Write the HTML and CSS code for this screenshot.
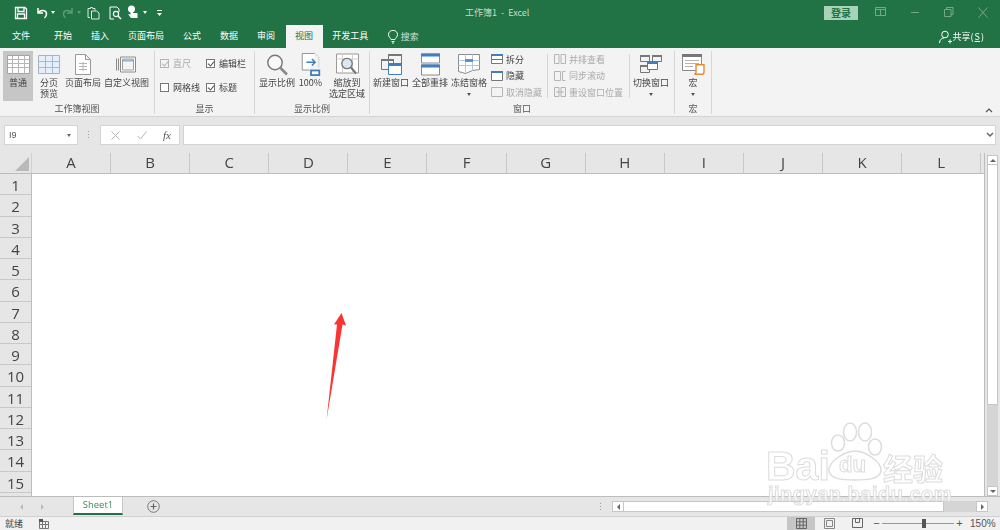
FILE: index.html
```html
<!DOCTYPE html>
<html lang="zh-CN">
<head>
    <meta charset="UTF-8">
    <title>工作簿1 - Excel</title>
    <link rel="stylesheet" href="styles.css">
</head>
<body>
<div class="app">
    <!-- title bar -->
    <div class="titlebar">
        <div class="qat">
            <svg class="qat-save" width="14" height="14" viewBox="0 0 14 14"><path d="M1.500 1.500h9.500l1.500 1.500v9.500h-11z M4 1.500v4h6v-4 M3.500 12.500v-4.500h7v4.500" fill="none" stroke="#fff" stroke-width="1.300"/></svg>
            <svg class="qat-undo" width="14" height="14" viewBox="0 0 14 14"><path d="M3 2v5h5 M3.500 6.500c2-3 8-3 8 1.500 0 1.500-.8 3-2 4" fill="none" stroke="#fff" stroke-width="1.500"/></svg>
            <span class="qat-caret"></span>
            <svg class="qat-redo" width="14" height="14" viewBox="0 0 14 14"><path d="M11 2v5h-5 M10.500 6.500c-2-3-8-3-8 1.500 0 1.500.8 3 2 4" fill="none" stroke="#5d9a78" stroke-width="1.500"/></svg>
            <span class="qat-caret dim"></span>
            <svg class="qat-copy" width="13" height="14" viewBox="0 0 13 14"><path d="M3 11.500h-2v-9h2.500v-1h2v1h2.500v2 M4.500 5h5l2.500 2v6h-7.500z" fill="none" stroke="#dbe9e0" stroke-width="1"/></svg>
            <svg class="qat-preview" width="13" height="14" viewBox="0 0 13 14"><path d="M10 6v-3l-2-2h-7v12h4" fill="none" stroke="#fff" stroke-width="1"/><circle cx="7" cy="8" r="2.600" fill="none" stroke="#fff" stroke-width="1.200"/><path d="M9 10l3 3" stroke="#fff" stroke-width="1.500"/></svg>
            <svg class="qat-touch" width="12" height="15" viewBox="0 0 12 15"><circle cx="4.500" cy="4" r="3.500" fill="#fff"/><path d="M3.500 4h2.500v4h4.500v5h-6.500l-3-4 2.500.5z" fill="#fff"/></svg>
            <span class="qat-caret"></span>
            <svg class="qat-more" width="5" height="6" viewBox="0 0 5 6"><path d="M0 .5h5" stroke="#fff"/><path d="M0 3h5l-2.500 3z" fill="#fff"/></svg>
        </div>
        <div class="doc-title">工作簿1&nbsp; -&nbsp; Excel</div>
        <div class="login">登录</div>
        <div class="win-btns">
            <svg width="12" height="10" viewBox="0 0 12 10"><path d="M.5.5h10v8h-10z M.5 2.500h10 M5.500 2.500v6" fill="none" stroke="#74a88b"/></svg>
            <svg width="12" height="10" viewBox="0 0 12 10"><path d="M2 5.500h8" stroke="#74a88b"/></svg>
            <svg width="12" height="10" viewBox="0 0 12 10"><path d="M1.500 2.500h6.500v7h-6.500z M3.500 2.500v-2h6.500v7h-2" fill="none" stroke="#74a88b"/></svg>
            <svg width="12" height="11" viewBox="0 0 12 11"><path d="M1.500.5l9 10 M10.500.5l-9 10" stroke="#74a88b"/></svg>
        </div>
    </div>

    <!-- ribbon tabs -->
    <div class="tabs">
        <span class="tab tab-file">文件</span>
        <span class="tab">开始</span>
        <span class="tab">插入</span>
        <span class="tab">页面布局</span>
        <span class="tab">公式</span>
        <span class="tab">数据</span>
        <span class="tab">审阅</span>
        <span class="tab active">视图</span>
        <span class="tab">开发工具</span>
        <span class="tab-search">
            <svg width="10" height="14" viewBox="0 0 10 14"><path d="M3 9.500c-.5-1.500-2.500-2.500-2.500-5a4.500 4.200 0 0 1 9 0c0 2.500-2 3.500-2.500 5z M3.500 11.500h3 M4 13h2" fill="none" stroke="#fff"/></svg>
            搜索
        </span>
        <span class="share">
            <svg width="13" height="14" viewBox="0 0 13 14"><circle cx="6" cy="4.500" r="3.300" fill="none" stroke="#fff"/><path d="M.5 13c0-3 2-5 4.500-5 M9 11.500h4 M11 9.500v4" fill="none" stroke="#fff"/></svg>
            共享(<u>S</u>)
        </span>
    </div>

    <!-- ribbon -->
    <div class="ribbon">
        <div class="group g-views">
            <div class="group-body">
                <div class="big selected w30">
                    <svg width="23" height="19" viewBox="0 0 23 19"><path fill="#fff" stroke="#a3a3a3" d="M.5.5h22v18h-22z"/><path fill="none" stroke="#b5b5b5" d="M.5 4.500h22 M.5 8.500h22 M.5 12.500h22 M5.500.5v18 M11.500.5v18 M17.500.5v18"/></svg>
                    <span>普通</span>
                </div>
                <div class="big w26">
                    <svg width="22" height="19" viewBox="0 0 22 19"><path fill="#e6eef7" stroke="#a6b2be" d="M.5.5h21v18h-21z"/><path fill="none" stroke="#9dbcdb" d="M.5 6.500h21 M.5 12.500h21 M7.500.5v18 M14.500.5v18"/></svg>
                    <span>分页<br>预览</span>
                </div>
                <div class="big w36">
                    <svg width="16" height="21" viewBox="0 0 16 21"><path fill="#fff" stroke="#999" d="M.5.5h10l5 5v15h-15z M10.500.5v5h5"/><path fill="none" stroke="#b5b5b5" d="M4 9.500h8 M4 12.500h8 M4 15.500h8 M8 8v9"/></svg>
                    <span>页面布局</span>
                </div>
                <div class="big w45">
                    <svg width="21" height="20" viewBox="0 0 21 20"><path fill="#fff" stroke="#8b8b8b" d="M4.500 2.500h15v15h-15z"/><path fill="#f3f3f3" stroke="#a0a0a0" d="M6.500 4.500h11v11h-11z"/><path fill="#8fb4d9" d="M7 5h10v2h-10z"/><path fill="none" stroke="#8b8b8b" d="M.5 4v12 M2.500 4v12"/></svg>
                    <span>自定义视图</span>
                </div>
            </div>
            <div class="group-label">工作簿视图</div>
        </div>

        <div class="group g-show">
            <div class="group-body checks">
                <label class="chk off"><i class="box on"></i>直尺</label>
                <label class="chk"><i class="box on"></i>编辑栏</label>
                <label class="chk"><i class="box"></i>网格线</label>
                <label class="chk"><i class="box on"></i>标题</label>
            </div>
            <div class="group-label">显示</div>
        </div>

        <div class="group g-zoom">
            <div class="group-body">
                <div class="big w36">
                    <svg width="22" height="22" viewBox="0 0 22 22"><circle cx="9" cy="9" r="7.200" fill="#f8f8f8" stroke="#777" stroke-width="1.400"/><path d="M14 14l7 7" stroke="#8a8a8a" stroke-width="2.600"/></svg>
                    <span>显示比例</span>
                </div>
                <div class="big w25">
                    <svg width="20" height="25" viewBox="0 0 20 25"><path fill="#fff" stroke="#8b8b8b" d="M14 .5h-13.500v18h8"/><path fill="none" stroke="#aaa" stroke-dasharray="1 1" d="M14 .5l4.500 4v12"/><path fill="none" stroke="#3f7fc0" stroke-width="1.600" d="M5 10h9 M11 6.500l3.500 3.500-3.500 3.500"/><path fill="#3f7fc0" d="M9 18h11v7h-11z"/><path fill="#fff" d="M11 20h7v3h-7z"/></svg>
                    <span>100%</span>
                </div>
                <div class="big w36 m5">
                    <svg width="23" height="22" viewBox="0 0 23 22"><path fill="#fff" stroke="#999" d="M.5.5h22v19h-22z"/><path fill="none" stroke="#d0d0d0" d="M.5 5.500h22 M6.500.5v19 M16.500.5v19"/><circle cx="11" cy="10" r="5.200" fill="#dbe8f4" stroke="#777" stroke-width="1.300"/><path d="M15 14l5 6" stroke="#777" stroke-width="2"/></svg>
                    <span>缩放到<br>选定区域</span>
                </div>
            </div>
            <div class="group-label">显示比例</div>
        </div>

        <div class="group g-window">
            <div class="group-body">
                <div class="big w36">
                    <svg width="21" height="21" viewBox="0 0 21 21"><path fill="#f3f3f3" stroke="#777" d="M7.500.5h13v10h-13z M.5 5.500h12v10h-12z"/><path fill="#777" d="M7 0h14v2h-14z M0 5h13v2h-13z"/><path fill="#fff" stroke="#3f7fc0" d="M7.500 9.500h13v11h-13z"/><path fill="#3f7fc0" d="M7 9h14v3h-14z"/></svg>
                    <span>新建窗口</span>
                </div>
                <div class="big w36">
                    <svg width="19" height="22" viewBox="0 0 19 22"><path fill="#fff" stroke="#8b8b8b" d="M.5.5h18v9h-18z M.5 11.500h18v10h-18z"/><path fill="#3f7fc0" d="M0 0h19v3h-19z M0 11h19v3h-19z"/></svg>
                    <span>全部重排</span>
                </div>
                <div class="big w36">
                    <svg width="22" height="21" viewBox="0 0 22 21"><path fill="#fff" stroke="#8b8b8b" d="M.5.5h21v15l-7 1-7 3-7-2z"/><path fill="none" stroke="#b5c9dc" d="M.5 6.500h21 M.5 11.500h21 M7.500.5v18 M14.500.5v16"/><path fill="#5b94cc" d="M7 5h8v3h-8z"/></svg>
                    <span>冻结窗格</span>
                    <i class="caret"></i>
                </div>
                <div class="small-col c-split">
                    <div class="small"><svg class="s-ic" width="12" height="10" viewBox="0 0 12 10"><path fill="#fff" stroke="#777" d="M.5.5h11v9h-11z"/><path fill="#3f7fc0" d="M0 0h12v2h-12z M1 5h10v1h-10z"/></svg>拆分</div>
                    <div class="small"><svg class="s-ic" width="12" height="10" viewBox="0 0 12 10"><path fill="#fff" stroke="#777" d="M.5.5h11v9h-11z"/><path fill="#3f7fc0" d="M0 0h12v2h-12z"/></svg>隐藏</div>
                    <div class="small off"><svg class="s-ic" width="12" height="10" viewBox="0 0 12 10"><path fill="#f3f3f3" stroke="#b5b5b5" d="M.5.5h11v9h-11z"/></svg>取消隐藏</div>
                </div>
                <div class="vsep"></div>
                <div class="small-col c-sync">
                    <div class="small off"><svg class="s-ic" width="12" height="10" viewBox="0 0 12 10"><path fill="none" stroke="#b5b5b5" d="M.5.5h4.500v9h-4.500z M7 .5h4.500v9h-4.500z"/></svg>并排查看</div>
                    <div class="small off"><svg class="s-ic" width="12" height="10" viewBox="0 0 12 10"><path fill="none" stroke="#b5b5b5" d="M.5.5h6v9h-6z M8.500.5h3 M8.500 9.500h3 M8.500.5v9"/></svg>同步滚动</div>
                    <div class="small off"><svg class="s-ic" width="12" height="10" viewBox="0 0 12 10"><path fill="none" stroke="#b5b5b5" d="M.5.5h4.500v9h-4.500z M7 .5h4.500v9h-4.500z M2 5h8"/></svg>重设窗口位置</div>
                </div>
                <div class="vsep"></div>
                <div class="big w36">
                    <svg width="22" height="19" viewBox="0 0 22 19"><path fill="#f3f3f3" stroke="#777" d="M.5.500h9v6h-9z M12.500.5h9v6h-9z M.5 10.500h9v7h-9z"/><path fill="#777" d="M0 0h10v2h-10z M12 0h10v2h-10z M0 10h10v2h-10z"/><path fill="#fff" stroke="#3f7fc0" d="M7.500 6.500h10v8h-10z"/><path fill="#3f7fc0" d="M7 6h11v3h-11z"/></svg>
                    <span>切换窗口</span>
                    <i class="caret"></i>
                </div>
            </div>
            <div class="group-label">窗口</div>
        </div>

        <div class="group g-macro">
            <div class="group-body">
                <div class="big w36">
                    <svg width="23" height="21" viewBox="0 0 23 21"><path fill="#fff" stroke="#8b8b8b" d="M.5.5h19v16h-19z"/><path fill="#777" d="M0 0h20v3h-20z"/><path fill="none" stroke="#b5b5b5" d="M3 6.500h14 M3 9.500h14 M3 12.500h8"/><path fill="#fff" stroke="#e58a33" stroke-width="1.400" d="M14 10.700h8v7c0 2-1 2.500-2 2.500h-7.500c1-.5 1.500-1 1.500-2z"/></svg>
                    <span>宏</span>
                    <i class="caret"></i>
                </div>
            </div>
            <div class="group-label">宏</div>
        </div>
        <svg class="collapse" width="8" height="5" viewBox="0 0 8 5"><path d="M1 4l3-3 3 3" fill="none" stroke="#555" stroke-width="1.200"/></svg>
    </div>

    <!-- formula bar -->
    <div class="formula-bar">
        <div class="name-box">I9<i class="caret"></i></div>
        <div class="grip"></div>
        <div class="fx-box">
            <svg width="9" height="9" viewBox="0 0 9 9"><path d="M.5.500l8 8 M8.500.5l-8 8" stroke="#b5b5b5"/></svg>
            <svg width="10" height="9" viewBox="0 0 10 9"><path d="M.5 5l3 3 6-7.500" fill="none" stroke="#b5b5b5"/></svg>
            <span class="fx">fx</span>
        </div>
        <div class="formula-input"><svg width="8" height="6" viewBox="0 0 8 6"><path d="M1 1l3 3 3-3" fill="none" stroke="#666" stroke-width="1.500"/></svg></div>
    </div>

    <!-- sheet -->
    <div class="sheet">
        <div class="sheet-main">
            <div class="col-head">
                <div class="corner"><i></i></div>
                <div class="col">A</div><div class="col">B</div><div class="col">C</div><div class="col">D</div>
                <div class="col">E</div><div class="col">F</div><div class="col">G</div><div class="col">H</div>
                <div class="col">I</div><div class="col">J</div><div class="col">K</div><div class="col">L</div>
            </div>
            <div class="sheet-body">
                <div class="row-head">
                    <div class="row">1</div><div class="row">2</div><div class="row">3</div><div class="row">4</div><div class="row">5</div>
                    <div class="row">6</div><div class="row">7</div><div class="row">8</div><div class="row">9</div><div class="row">10</div>
                    <div class="row">11</div><div class="row">12</div><div class="row">13</div><div class="row">14</div><div class="row">15</div>
                </div>
                <div class="cells"></div>
            </div>
        </div>
        <div class="vscroll">
            <div class="sb-btn"><i class="tri up"></i></div>
            <div class="v-thumb"></div>
            <div class="v-track"></div>
            <div class="sb-btn"><i class="tri down"></i></div>
        </div>
    </div>

    <!-- sheet tabs -->
    <div class="tabbar">
        <i class="tri left dim nav-a"></i>
        <i class="tri right dim nav-b"></i>
        <div class="sheet-tab">Sheet1</div>
        <svg class="add-sheet" width="13" height="13" viewBox="0 0 13 13"><circle cx="6.500" cy="6.500" r="5.800" fill="none" stroke="#777"/><path d="M3.500 6.500h6 M6.500 3.500v6" stroke="#666" stroke-width="1.200"/></svg>
        <div class="grip tab-grip"></div>
        <div class="hscroll">
            <div class="sb-btn h"><i class="tri left"></i></div>
            <div class="h-thumb"></div>
            <div class="h-track"></div>
            <div class="sb-btn h"><i class="tri right"></i></div>
        </div>
    </div>

    <!-- status bar -->
    <div class="statusbar">
        <span class="ready">就绪</span>
        <svg class="macro-ic" width="10" height="10" viewBox="0 0 10 10"><path d="M.5 2.500h9v7h-9z M.5 5.500h9 M3.500 2.500v7 M6.500 2.500v7" fill="none" stroke="#777"/><path fill="#555" d="M0 0h4v3h-4z"/></svg>
        <div class="views">
            <div class="view active"><svg width="11" height="11" viewBox="0 0 11 11"><path d="M.5.5h10v10h-10z M.5 3.800h10 M.5 7.200h10 M3.800.5v10 M7.200.5v10" fill="none" stroke="#666"/></svg></div>
            <div class="view"><svg width="11" height="11" viewBox="0 0 11 11"><path d="M.5.5h10v10h-10z M2.500 2.500h6v6h-6z" fill="none" stroke="#888"/></svg></div>
            <div class="view"><svg width="11" height="11" viewBox="0 0 11 11"><path d="M.5.5h10v9h-10z M3.500.5v4h4v-4" fill="none" stroke="#666"/></svg></div>
        </div>
        <div class="zoom">
            <span class="z-sign">−</span>
            <div class="z-line"><i></i></div>
            <span class="z-sign">+</span>
        </div>
        <span class="z-pct">150%</span>
    </div>

    <!-- overlays: annotation arrow and image watermark -->
    <svg class="arrow" width="24" height="110" viewBox="0 0 24 110"><path d="M18.500 1L23 13.500 19.500 12.500 3.500 108 14 12.500 11 12.500z" fill="#fb3333"/></svg>
    <div class="watermark">
        <svg class="paw" width="58" height="60" viewBox="0 0 58 60"><g fill="rgba(255,255,255,.7)" stroke="#dcdcdc" stroke-width="1.500"><ellipse cx="12" cy="21" rx="6.500" ry="8"/><ellipse cx="24" cy="10" rx="6.500" ry="9"/><ellipse cx="39" cy="10" rx="6.500" ry="9"/><ellipse cx="49" cy="25" rx="6.500" ry="8"/><path d="M29 29c9 0 27 10 26 20-1 9-17 9-26 9s-25 0-26-9c-1-10 17-20 26-20z"/></g></svg>
        <div class="wm-bai">Bai</div>
        <div class="wm-du">du</div>
        <div class="wm-jy">经验</div>
        <div class="wm-url">jingyan.baidu.com</div>
    </div>
</div>
</body>
</html>
```

FILE: styles.css
```css
* {
    box-sizing: border-box;
}
body {
    margin: 0;
    font-family: "Noto Sans CJK SC", "Liberation Sans", sans-serif;
    font-size: 9px;
    color: #444;
    background-color: #e6e6e6;
}
.app {
    position: relative;
    width: 1000px;
    height: 530px;
    overflow: hidden;
    display: flex;
    flex-direction: column;
    filter: blur(.35px);
}

/* title bar */
.titlebar {
    height: 25px;
    background-color: #217346;
    color: #fff;
    display: flex;
    align-items: center;
}
.qat {
    width: 465px;
    padding-left: 14px;
    display: flex;
    align-items: center;
}
.qat-caret {
    width: 0;
    height: 0;
    margin: 0 6px 0 2px;
    border: 2px solid transparent;
    border-top: 3px solid #fff;
    border-bottom: 0;
}
.qat-caret.dim {
    border-top-color: #5d9a78;
}
.qat-save {
    margin-right: 7px;
}
.qat-copy {
    margin-right: 9px;
}
.qat-preview {
    margin-right: 5px;
}
.qat-touch {
    margin-right: 2px;
}
.qat-more {
    margin-left: 4px;
}
.doc-title {
    width: 359px;
    color: #c4dbcc;
    font-size: 9px;
}
.login {
    width: 34px;
    height: 14px;
    line-height: 14px;
    text-align: center;
    background-color: #a9d3b9;
    color: #217346;
    font-size: 10px;
    font-weight: bold;
}
.win-btns {
    margin-left: 17px;
    width: 114px;
    display: flex;
    justify-content: space-between;
}

/* tabs */
.tabs {
    height: 23px;
    background-color: #217346;
    color: #fff;
    display: flex;
    align-items: stretch;
}
.tab {
    padding: 0 9.5px;
    line-height: 22px;
}
.tab-file {
    padding: 0 12px;
    margin-right: 2.5px;
}
.tab.active {
    margin-left: 1px;
    background-color: #f3f3f3;
    color: #217346;
}
.tab-search {
    margin-left: 10px;
    display: flex;
    align-items: center;
    gap: 3px;
    color: #cfe2d6;
}
.share {
    margin-left: auto;
    margin-right: 16px;
    display: flex;
    align-items: center;
    gap: 1px;
}

/* ribbon */
.ribbon {
    position: relative;
    height: 69px;
    background-color: #f3f3f3;
    border-bottom: 1px solid #d4d4d4;
    display: flex;
    padding-top: 3px;
}
.group {
    height: 63px;
    border-right: 1px solid #d6d6d6;
    display: flex;
    flex-direction: column;
    flex: none;
}
.g-views {
    width: 155px;
}
.g-show {
    width: 100px;
}
.g-zoom {
    width: 115px;
}
.g-window {
    width: 305px;
}
.g-macro {
    width: 37px;
}
.group-body {
    height: 53px;
    padding-left: 3px;
    display: flex;
    gap: 3px;
}
.g-zoom .group-body {
    padding-left: 4px;
}
.g-macro .group-body {
    padding-left: 0;
}
.group-label {
    text-align: center;
    line-height: 11px;
    color: #555;
}
.big {
    height: 50px;
    padding-top: 2px;
    display: flex;
    flex-direction: column;
    align-items: center;
    text-align: center;
    line-height: 11px;
    flex: none;
}
.big svg {
    height: 23px;
    margin-bottom: 1px;
    flex: none;
    overflow: visible;
}
.big.selected {
    background-color: #c6c6c6;
}
.w25 {
    width: 25px;
}
.w26 {
    width: 26px;
}
.w30 {
    width: 30px;
}
.w36 {
    width: 36px;
}
.w45 {
    width: 45px;
    white-space: nowrap;
}
.m5 {
    margin-left: 3px;
}
.caret {
    display: block;
    width: 0;
    height: 0;
    margin-top: 5px;
    border: 2px solid transparent;
    border-top: 3px solid #555;
    border-bottom: 0;
}

/* display checkboxes */
.checks {
    padding: 4px 0 0 5px;
    display: grid;
    grid-template-columns: 46px 1fr;
    grid-template-rows: 24px 24px;
    gap: 0;
}
.chk {
    display: flex;
    align-items: center;
    gap: 4px;
    height: 16px;
}
.chk.off {
    color: #aaa;
}
.box {
    width: 9px;
    height: 9px;
    background-color: #fff;
    border: 1px solid #777;
    position: relative;
}
.chk.off .box {
    background-color: #f3f3f3;
    border-color: #b5b5b5;
}
.box.on::after {
    content: "";
    position: absolute;
    left: 2px;
    top: 0;
    width: 3px;
    height: 5px;
    border-right: 1px solid #555;
    border-bottom: 1px solid #555;
    transform: rotate(40deg);
}
.chk.off .box.on::after {
    border-color: #b5b5b5;
}

/* small stacked buttons */
.small-col {
    display: flex;
    flex-direction: column;
    flex: none;
}
.small {
    height: 16.5px;
    display: flex;
    align-items: center;
    gap: 3px;
    white-space: nowrap;
}
.small.off {
    color: #aaa;
}
.s-ic {
    flex: none;
}
.c-split {
    width: 53px;
    margin-left: 1px;
}
.c-sync {
    width: 72px;
    margin-left: 3px;
}
.vsep {
    width: 1px;
    height: 44px;
    margin-top: 3px;
    background-color: #d6d6d6;
    flex: none;
}
.collapse {
    position: absolute;
    right: 7px;
    bottom: 3px;
}

/* formula bar */
.formula-bar {
    height: 36px;
    padding: 8px 4px;
    background-color: #e6e6e6;
    display: flex;
    align-items: stretch;
}
.name-box {
    width: 74px;
    background-color: #fff;
    border: 1px solid #d4d4d4;
    padding: 0 4px;
    line-height: 18px;
    color: #555;
    display: flex;
    align-items: center;
    justify-content: space-between;
    font-family: "Liberation Sans", sans-serif;
}
.name-box .caret {
    margin: 0 2px 0 0;
    border-width: 3px 2.5px 0;
    border-style: solid;
    border-color: #666 transparent transparent;
}
.grip {
    width: 1px;
    height: 8px;
    margin: 6px 11px 0 10px;
    background: repeating-linear-gradient(#999 0 1px, transparent 1px 3px);
    flex: none;
}
.fx-box {
    width: 80px;
    background-color: #fff;
    border: 1px solid #d4d4d4;
    display: flex;
    align-items: center;
    justify-content: space-between;
    padding: 0 8px 0 10px;
}
.fx {
    font-family: "Liberation Serif", serif;
    font-style: italic;
    font-size: 11px;
    color: #555;
}
.formula-input {
    flex: 1;
    margin-left: 3px;
    background-color: #fff;
    border: 1px solid #d4d4d4;
    display: flex;
    align-items: center;
    justify-content: flex-end;
    padding-right: 1px;
}

/* sheet */
.sheet {
    height: 344px;
    display: flex;
    border-bottom: 1px solid #bcbcbc;
}
.sheet-main {
    width: 985px;
    border-right: 1px solid #bcbcbc;
    display: flex;
    flex-direction: column;
}
.col-head {
    height: 21px;
    display: flex;
    border-bottom: 1px solid #bcbcbc;
    flex: none;
}
.corner {
    width: 32px;
    padding: 4px 0 0 15px;
    border-right: 1px solid #d0d0d0;
    flex: none;
}
.corner i {
    display: block;
    width: 0;
    height: 0;
    border-left: 14px solid transparent;
    border-bottom: 14px solid #b9b9b9;
}
.col {
    width: 79.1px;
    flex: none;
    border-right: 1px solid #c8c8c8;
    text-align: center;
    font: 15px/19px "Open Sans", sans-serif;
    color: #444;
}
.sheet-body {
    flex: 1;
    display: flex;
    min-height: 0;
}
.row-head {
    width: 32px;
    flex: none;
    border-right: 1px solid #bcbcbc;
}
.row {
    height: 21.25px;
    border-bottom: 1px solid #c8c8c8;
    text-align: center;
    font: 15px/22px "Open Sans", sans-serif;
    color: #444;
}
.cells {
    flex: 1;
    background-color: #fff;
}
.vscroll {
    width: 15px;
    padding: 2px 2px 0;
    display: flex;
    flex-direction: column;
}
.sb-btn {
    height: 10px;
    background-color: #fff;
    border: 1px solid #c6c6c6;
    display: flex;
    align-items: center;
    justify-content: center;
    flex: none;
}
.v-thumb {
    height: 240px;
    background-color: #fff;
    border: 1px solid #c6c6c6;
    border-top: 0;
    flex: none;
}
.v-track {
    flex: 1;
    background-color: #d5d5d5;
}
.tri {
    display: block;
    width: 0;
    height: 0;
    border-style: solid;
    border-color: transparent;
}
.tri.up {
    border-width: 0 3px 3px;
    border-bottom-color: #666;
}
.tri.down {
    border-width: 3px 3px 0;
    border-top-color: #666;
}
.tri.left {
    border-width: 3px 3px 3px 0;
    border-right-color: #666;
}
.tri.right {
    border-width: 3px 0 3px 3px;
    border-left-color: #666;
}
.tri.left.dim {
    border-right-color: #bbb;
}
.tri.right.dim {
    border-left-color: #bbb;
}

/* sheet tabs */
.tabbar {
    height: 20px;
    display: flex;
    align-items: center;
    background-color: #e6e6e6;
    border-bottom: 1px solid #d0d0d0;
}
.nav-a {
    margin-left: 20px;
}
.nav-b {
    margin-left: 18px;
}
.sheet-tab {
    width: 50px;
    height: 18px;
    margin-left: 29px;
    background-color: #fff;
    border: 1px solid #c6c6c6;
    border-top: 0;
    border-bottom: 2px solid #217346;
    color: #3a8a5e;
    text-align: center;
    line-height: 16px;
    font-family: "Open Sans", sans-serif;
    font-size: 9.5px;
    align-self: flex-start;
}
.add-sheet {
    margin-left: 24px;
}
.tab-grip {
    margin: 0 0 0 440px;
}
.hscroll {
    margin-left: 11px;
    width: 376px;
    height: 11px;
    display: flex;
}
.sb-btn.h {
    width: 12px;
    height: 11px;
}
.h-thumb {
    width: 320px;
    background-color: #fff;
    border: 1px solid #c6c6c6;
    border-left: 0;
}
.h-track {
    flex: 1;
    background-color: #d5d5d5;
}

/* status bar */
.statusbar {
    height: 13px;
    background-color: #f1f1f1;
    display: flex;
    align-items: center;
    padding-left: 5px;
    line-height: 13px;
}
.macro-ic {
    margin-left: 16px;
}
.views {
    margin-left: 738px;
    display: flex;
    height: 13px;
}
.view {
    width: 28px;
    display: flex;
    align-items: center;
    justify-content: center;
}
.view.active {
    background-color: #c6c6c6;
}
.zoom {
    margin-left: 2px;
    display: flex;
    align-items: center;
    gap: 2px;
}
.z-sign {
    font-family: "Liberation Sans", sans-serif;
    font-size: 11px;
    width: 7px;
    text-align: center;
    color: #555;
}
.z-line {
    position: relative;
    width: 72px;
    height: 1px;
    background-color: #999;
}
.z-line i {
    position: absolute;
    left: 40px;
    top: -4px;
    width: 4px;
    height: 9px;
    background-color: #555;
}
.z-pct {
    margin-left: 7px;
    font-family: "Liberation Sans", sans-serif;
    font-size: 10px;
    color: #555;
}

/* overlays */
.arrow {
    position: absolute;
    left: 323px;
    top: 312px;
}
.watermark {
    position: absolute;
    left: 766px;
    top: 422px;
    width: 180px;
    height: 92px;
    color: rgba(255, 255, 255, .7);
    -webkit-text-stroke: 1px #dcdcdc;
    white-space: nowrap;
}
.paw {
    position: absolute;
    left: 60px;
    top: 0;
}
.wm-bai {
    position: absolute;
    left: 0;
    top: 29px;
    font: bold 41px/30px "Liberation Sans", sans-serif;
}
.wm-du {
    position: absolute;
    left: 73px;
    top: 35px;
    font: bold 22px/16px "Liberation Sans", sans-serif;
}
.wm-jy {
    position: absolute;
    left: 117px;
    top: 30px;
    font: bold 30px/30px "Noto Sans CJK SC", sans-serif;
}
.wm-url {
    position: absolute;
    left: 2px;
    top: 63px;
    font: bold 20px/18px "Liberation Sans", sans-serif;
    letter-spacing: .5px;
}
```
